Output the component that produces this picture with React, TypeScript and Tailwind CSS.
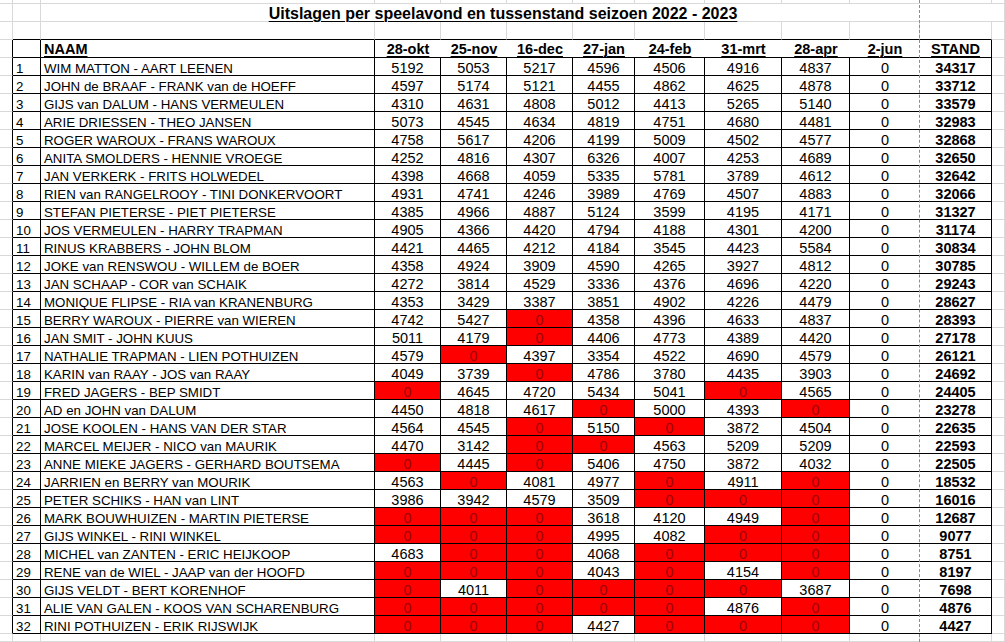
const COLS =
  "grid grid-cols-[13px_28px_334px_66px_66px_66px_62px_70px_77px_68px_70px_72px_13px]";
const GREY = "border-r border-b border-[#d9d9d9]";
const SANS = "font-['Liberation_Sans',Arial,sans-serif] text-[13.3px]";
const NARROW = "font-['Liberation_Sans_Narrow','Arial_Narrow','Liberation_Sans',sans-serif] text-[14.5px]";

// "x" marks an evening that was not played: shown as a red 0
const DATA: [string, string, number][] = [
  ["WIM MATTON - AART LEENEN", "5192 5053 5217 4596 4506 4916 4837", 34317],
  ["JOHN de BRAAF - FRANK van de HOEFF", "4597 5174 5121 4455 4862 4625 4878", 33712],
  ["GIJS van DALUM - HANS VERMEULEN", "4310 4631 4808 5012 4413 5265 5140", 33579],
  ["ARIE DRIESSEN - THEO JANSEN", "5073 4545 4634 4819 4751 4680 4481", 32983],
  ["ROGER WAROUX - FRANS WAROUX", "4758 5617 4206 4199 5009 4502 4577", 32868],
  ["ANITA SMOLDERS - HENNIE VROEGE", "4252 4816 4307 6326 4007 4253 4689", 32650],
  ["JAN VERKERK - FRITS HOLWEDEL", "4398 4668 4059 5335 5781 3789 4612", 32642],
  ["RIEN van RANGELROOY - TINI DONKERVOORT", "4931 4741 4246 3989 4769 4507 4883", 32066],
  ["STEFAN PIETERSE - PIET PIETERSE", "4385 4966 4887 5124 3599 4195 4171", 31327],
  ["JOS VERMEULEN - HARRY TRAPMAN", "4905 4366 4420 4794 4188 4301 4200", 31174],
  ["RINUS KRABBERS - JOHN BLOM", "4421 4465 4212 4184 3545 4423 5584", 30834],
  ["JOKE van RENSWOU - WILLEM de BOER", "4358 4924 3909 4590 4265 3927 4812", 30785],
  ["JAN SCHAAP - COR van SCHAIK", "4272 3814 4529 3336 4376 4696 4220", 29243],
  ["MONIQUE FLIPSE - RIA van KRANENBURG", "4353 3429 3387 3851 4902 4226 4479", 28627],
  ["BERRY WAROUX - PIERRE van WIEREN", "4742 5427 x 4358 4396 4633 4837", 28393],
  ["JAN SMIT - JOHN KUUS", "5011 4179 x 4406 4773 4389 4420", 27178],
  ["NATHALIE TRAPMAN - LIEN POTHUIZEN", "4579 x 4397 3354 4522 4690 4579", 26121],
  ["KARIN van RAAY - JOS van RAAY", "4049 3739 x 4786 3780 4435 3903", 24692],
  ["FRED JAGERS - BEP SMIDT", "x 4645 4720 5434 5041 x 4565", 24405],
  ["AD en JOHN van DALUM", "4450 4818 4617 x 5000 4393 x", 23278],
  ["JOSE KOOLEN - HANS VAN DER STAR", "4564 4545 x 5150 x 3872 4504", 22635],
  ["MARCEL MEIJER - NICO van MAURIK", "4470 3142 x x 4563 5209 5209", 22593],
  ["ANNE MIEKE JAGERS - GERHARD BOUTSEMA", "x 4445 x 5406 4750 3872 4032", 22505],
  ["JARRIEN en BERRY van MOURIK", "4563 x 4081 4977 x 4911 x", 18532],
  ["PETER SCHIKS - HAN van LINT", "3986 3942 4579 3509 x x x", 16016],
  ["MARK BOUWHUIZEN - MARTIN PIETERSE", "x x x 3618 4120 4949 x", 12687],
  ["GIJS WINKEL - RINI WINKEL", "x x x 4995 4082 x x", 9077],
  ["MICHEL van ZANTEN - ERIC HEIJKOOP", "4683 x x 4068 x x x", 8751],
  ["RENE van de WIEL - JAAP van der HOOFD", "x x x 4043 x 4154 x", 8197],
  ["GIJS VELDT - BERT KORENHOF", "x 4011 x x x x 3687", 7698],
  ["ALIE VAN GALEN - KOOS VAN SCHARENBURG", "x x x x x 4876 x", 4876],
  ["RINI POTHUIZEN - ERIK RIJSWIJK", "x x x 4427 x x x", 4427],
];

const DATES = ["28-okt", "25-nov", "16-dec", "27-jan", "24-feb", "31-mrt", "28-apr"];

function BlankRow({ height }: { height: string }) {
  return (
    <div className={`${COLS} ${height}`}>
      {Array.from({ length: 13 }, (_, i) => (
        <div key={i} className={GREY} />
      ))}
    </div>
  );
}

function HeaderRow() {
  const head = `${NARROW} font-bold underline decoration-1 underline-offset-[2px] leading-[15px] pt-[2px]`;
  return (
    <div className={`${COLS} h-[18px]`}>
      <div className="border-r border-r-black border-b border-b-[#d9d9d9]" />
      <div className="border-r border-b border-black" />
      <div className={`border-r border-b border-black pl-[3px] ${head}`}>NAAM</div>
      {DATES.map((d) => (
        <div key={d} className={`border-b border-black text-center ${head}`}>
          {d}
        </div>
      ))}
      <div className={`border-b border-black text-center ${head}`}>2-jun</div>
      <div className={`border-r border-b border-black text-center ${head}`}>STAND</div>
      <div className={GREY} />
    </div>
  );
}

function ScoreRow({ rank, name, scores, total }: { rank: number; name: string; scores: string; total: number }) {
  const line = "leading-[13px] pt-[4px]";
  const num = `${NARROW} ${line} text-center`;
  return (
    <div className={`${COLS} h-[18px]`}>
      <div className="border-r border-r-black border-b border-b-[#d9d9d9]" />
      <div className={`border-r border-b border-black pl-[3px] ${SANS} ${line}`}>{rank}</div>
      <div className={`border-r border-b border-black pl-[3px] whitespace-nowrap ${SANS} ${line}`}>
        {name}
      </div>
      {scores.split(" ").map((s, i) =>
        s === "x" ? (
          <div key={i} className={`border-r border-b border-black bg-[#ff0000] text-[#9c0006] ${num}`}>
            0
          </div>
        ) : (
          <div key={i} className={`border-r border-b border-black ${num}`}>
            {s}
          </div>
        )
      )}
      <div className={`border-b border-black ${num}`}>0</div>
      <div className={`border-r border-b border-black font-bold ${num}`}>{total}</div>
      <div className={GREY} />
    </div>
  );
}

export default function App() {
  return (
    <div className="relative w-[1005px] h-[642px] overflow-hidden bg-white text-black">
      <BlankRow height="h-[4px]" />
      <div className={`${COLS} h-[18px]`}>
        <div className={GREY} />
        <div className={GREY} />
        <div className="col-span-10 flex justify-center pr-[27px] pt-[2px] border-b border-[#d9d9d9]">
          <span className="font-['Liberation_Sans',Arial,sans-serif] text-[16px] leading-[15px] font-bold underline decoration-1 underline-offset-[2px] whitespace-nowrap">
            Uitslagen per speelavond en tussenstand seizoen 2022 - 2023
          </span>
        </div>
        <div className={GREY} />
      </div>
      <div className={`${COLS} h-[18px]`}>
        <div className={GREY} />
        {Array.from({ length: 11 }, (_, i) => (
          <div key={i} className="border-r border-r-[#d9d9d9] border-b border-b-black" />
        ))}
        <div className={GREY} />
      </div>
      <HeaderRow />
      {DATA.map(([name, scores, total], i) => (
        <ScoreRow key={name} rank={i + 1} name={name} scores={scores} total={total} />
      ))}
      <BlankRow height="h-[8px]" />
      {/* page break marker */}
      <div className="absolute left-[919px] top-0 bottom-0 border-l border-dashed border-[#8c8c8c]" />
    </div>
  );
}
